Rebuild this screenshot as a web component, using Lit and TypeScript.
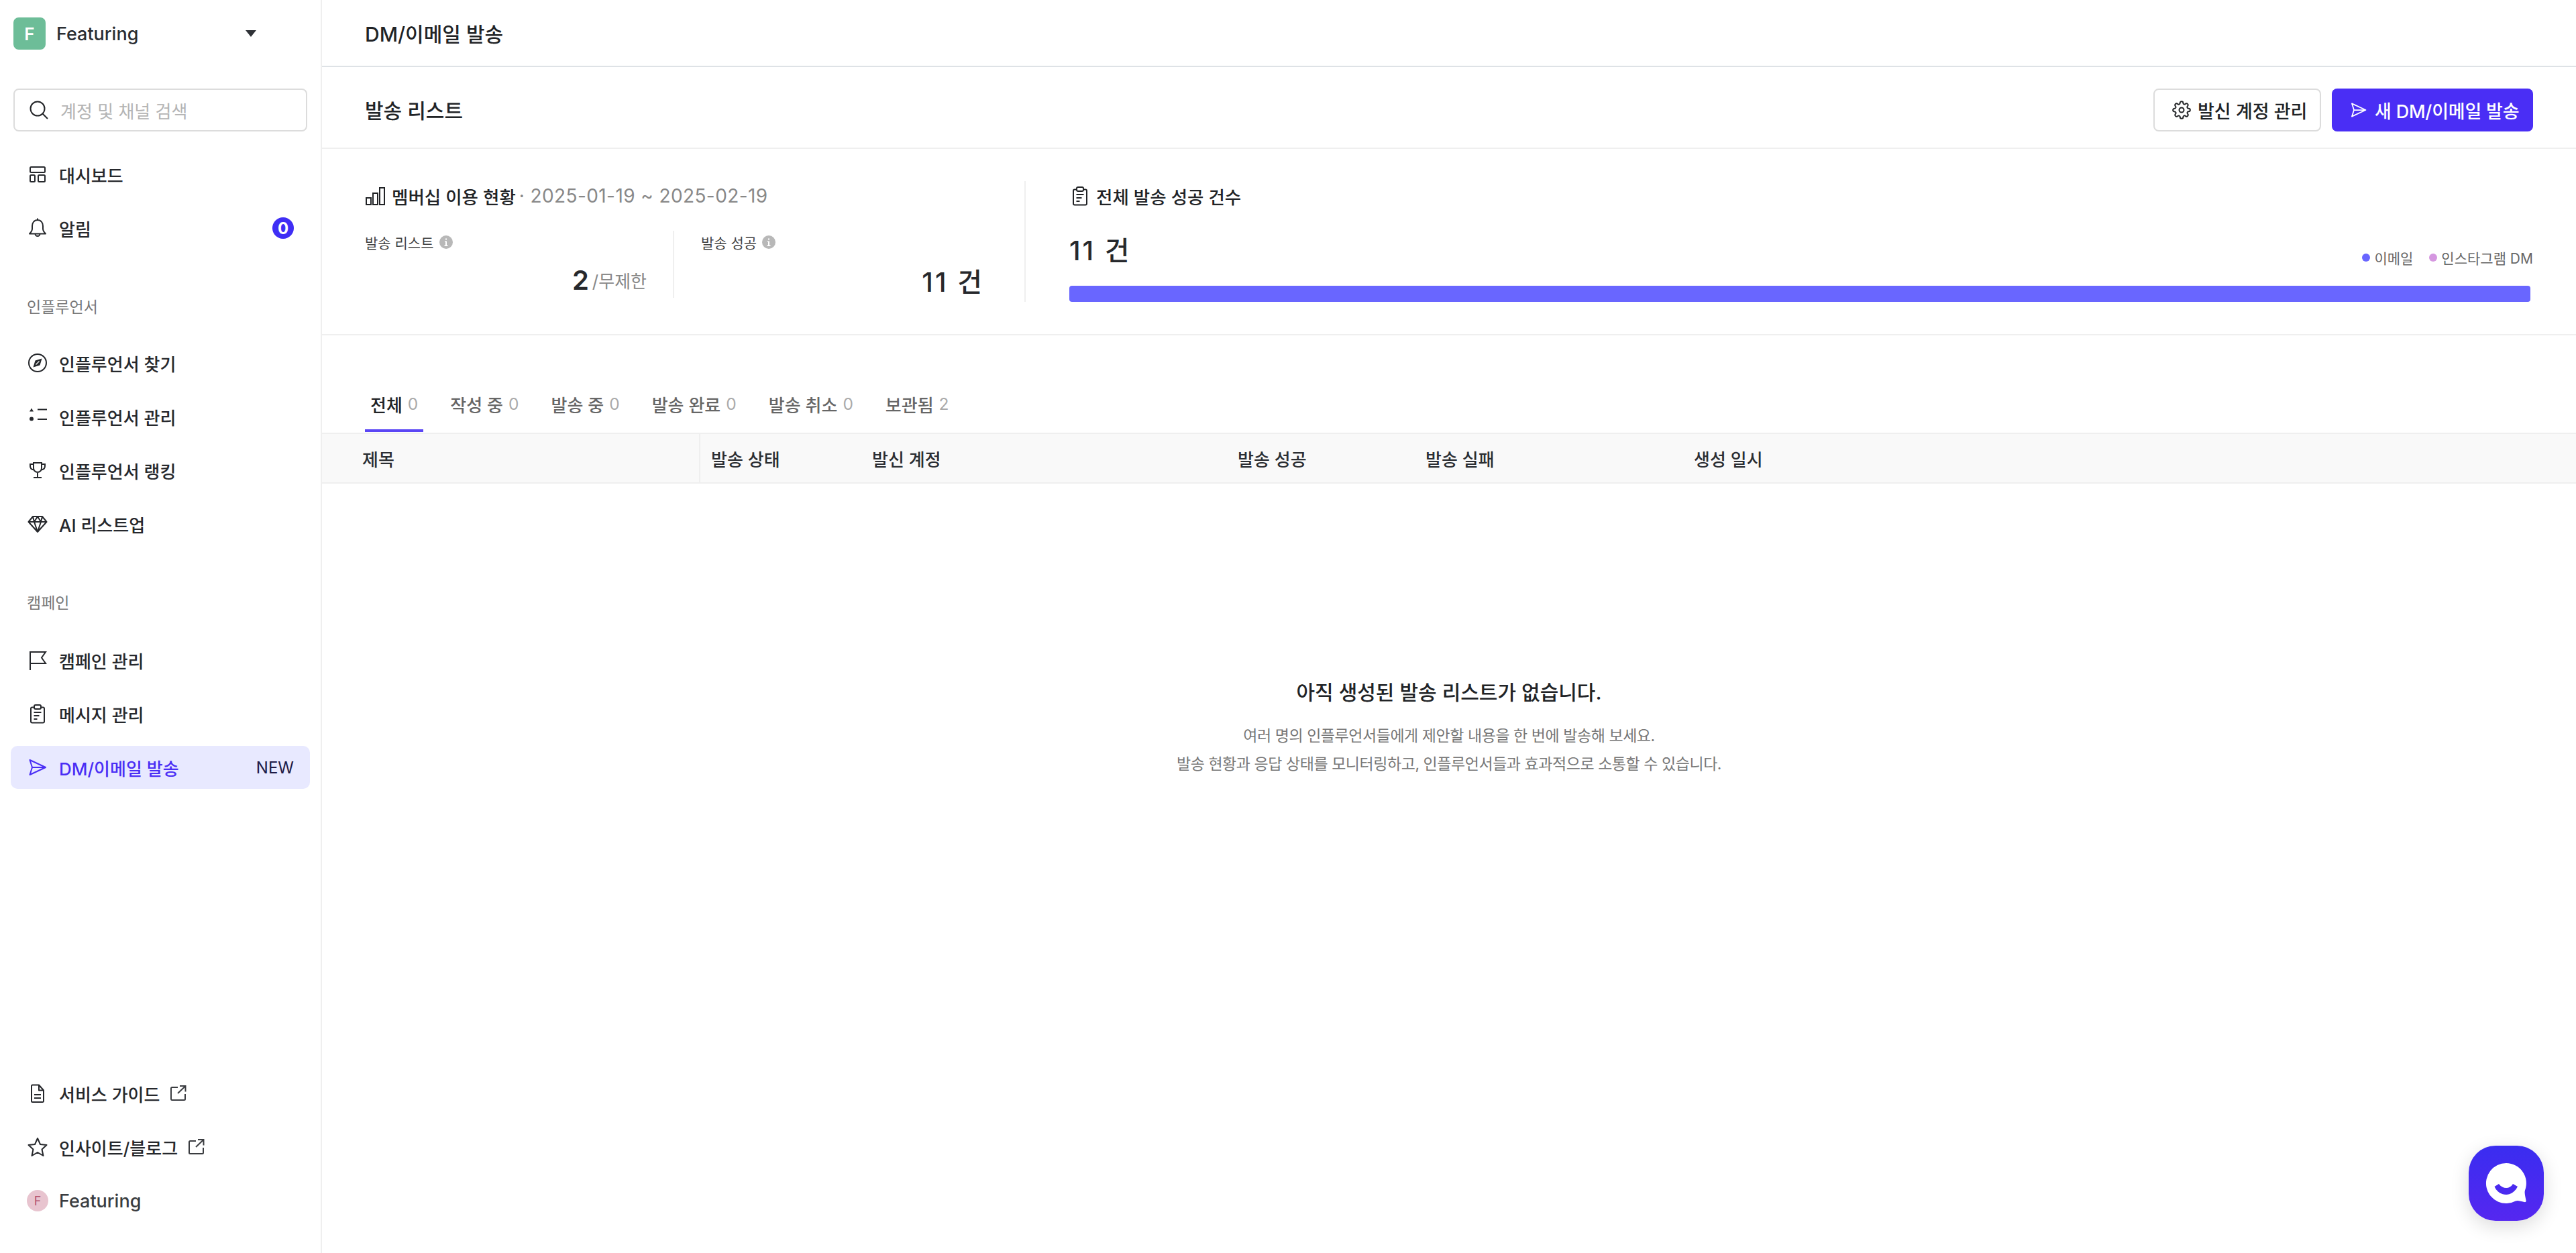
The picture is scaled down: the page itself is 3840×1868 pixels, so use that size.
import { LitElement, html, css, svg } from "lit";
import { customElement } from "lit/decorators.js";

const I = (s: unknown, cls = "ic") => html`<svg class=${cls} viewBox="0 0 32 32" fill="none" stroke="currentColor" stroke-width="2">${s}</svg>`;
const send = svg`<path stroke-linejoin="round" d="M4.5 5 28 16 4.5 27 8 16ZM8 16h20"/>`;
const icons: Record<string, unknown> = {
  dash: svg`<rect x="5" y="5" width="22" height="8" rx="1.5"/><rect x="5" y="17" width="7" height="10" rx="1.5"/><rect x="17" y="17" width="10" height="10" rx="1.5"/>`,
  bell: svg`<path stroke-linejoin="round" d="M16 4c-5 0-8 4-8 9v4c0 3-1.5 5-4 7.500h24c-2.500-2.500-4-4.500-4-7.500v-4c0-5-3-9-8-9ZM16 1.500V4M12.500 24.500a3.500 3.500 0 0 0 7 0"/>`,
  compass: svg`<circle cx="16" cy="16" r="13"/><path fill="currentColor" stroke="none" d="M9.500 22.500 12.500 12.500 22.500 9.500 19.500 19.500Z"/><path stroke="#fff" stroke-width="1.200" d="M13.500 18.500 18.500 13.500"/>`,
  list: svg`<path fill="currentColor" stroke="none" d="M7 3.500l3 5H4Z"/><circle cx="7" cy="19.500" r="3" fill="currentColor" stroke="none"/><path d="M16 5.500h14M16 20h14"/>`,
  trophy: svg`<path d="M10 5h12v8a6 6 0 0 1-12 0ZM10 7H5v3c0 3 2 5 5.500 5.500M22 7h5v3c0 3-2 5-5.500 5.500M16 19v8M10 27h12"/>`,
  gem: svg`<path stroke-linejoin="round" d="M9 5h14l6.500 8L16 28 2.500 13ZM2.500 13h27M11 13l5 15 5-15M9 5l2 8 5-8 5 8 2-8"/>`,
  flag: svg`<path d="M5 31V4h23l-6 8.500 6 8.500H5"/>`,
  clip: svg`<rect x="6" y="6.500" width="20" height="23" rx="2"/><rect x="11" y="3" width="10" height="6" rx="2" fill="#fff"/><path d="M10.500 14h11M10.500 19h8M10.500 24h5"/>`,
  send,
  doc: svg`<path stroke-linejoin="round" d="M7 5a1.500 1.500 0 0 1 1.500-1.500H18l7 8v16a1.500 1.500 0 0 1-1.500 1.500h-15A1.500 1.500 0 0 1 7 27.500ZM18 3.500v8h7M11 18h10M11 23h10"/>`,
  star: svg`<path stroke-linejoin="round" d="M16 3l4 9 9.500 1-7 6.500 2 9.500-8.500-5-8.500 5 2-9.500-7-6.500 9.500-1Z"/>`,
};
const ext = html`<svg class="ext" viewBox="0 0 24 24" fill="none" stroke="currentColor" stroke-width="2"><path d="M11 3H2.500A1.500 1.500 0 0 0 1 4.500v16A1.500 1.500 0 0 0 2.500 22h18a1.500 1.500 0 0 0 1.500-1.500V13M14 1h8.500v8.500M22 1.500 11 12"/></svg>`;
const gear = html`<svg class="gear" viewBox="0 0 24 24" fill="none" stroke="currentColor" stroke-width="1.700"><circle cx="12" cy="12" r="3"/><path d="M19.400 15a1.650 1.650 0 0 0 .33 1.820l.06.06a2 2 0 0 1 0 2.830 2 2 0 0 1-2.830 0l-.06-.06a1.650 1.650 0 0 0-1.820-.33 1.650 1.650 0 0 0-1 1.510V21a2 2 0 0 1-2 2 2 2 0 0 1-2-2v-.09A1.650 1.650 0 0 0 9 19.400a1.650 1.650 0 0 0-1.820.33l-.06.06a2 2 0 0 1-2.830 0 2 2 0 0 1 0-2.830l.06-.06a1.650 1.650 0 0 0 .33-1.820 1.650 1.650 0 0 0-1.510-1H3a2 2 0 0 1-2-2 2 2 0 0 1 2-2h.09A1.650 1.650 0 0 0 4.600 9a1.650 1.650 0 0 0-.33-1.820l-.06-.06a2 2 0 0 1 0-2.830 2 2 0 0 1 2.830 0l.06.06a1.650 1.650 0 0 0 1.820.33H9a1.650 1.650 0 0 0 1-1.510V3a2 2 0 0 1 2-2 2 2 0 0 1 2 2v.09a1.650 1.650 0 0 0 1 1.510 1.650 1.650 0 0 0 1.820-.33l.06-.06a2 2 0 0 1 2.830 0 2 2 0 0 1 0 2.830l-.06.06a1.650 1.650 0 0 0-.33 1.820V9a1.650 1.650 0 0 0 1.510 1H21a2 2 0 0 1 2 2 2 2 0 0 1-2 2h-.09a1.650 1.650 0 0 0-1.510 1z"/></svg>`;
const info = html`<svg class="info" viewBox="0 0 20 20"><circle cx="10" cy="10" r="10" fill="#b8b8b8"/><path fill="#fff" d="M9 4.500h2v2H9ZM8 8.500h3v6h1.500V16h-5v-1.500H9v-4.500H8Z"/></svg>`;

const tabs = [["전체", "0"], ["작성 중", "0"], ["발송 중", "0"], ["발송 완료", "0"], ["발송 취소", "0"], ["보관됨", "2"]];
const cols = ["제목", "발송 상태", "발신 계정", "발송 성공", "발송 실패", "생성 일시"];

@customElement("app-root")
export class AppRoot extends LitElement {
  static styles = css`
    :host { display: block; position: relative; height: 1868px; overflow: hidden; background: #fff; color: #212326;
      font-family: Inter, "Noto Sans CJK KR", sans-serif; font-size: 26px; }
    * { box-sizing: border-box; }
    .app { display: grid; grid-template-columns: 480px 1fr; height: 100%; }
    .side { display: flex; flex-direction: column; border-right: 2px solid #efefef; padding: 26px 16px 0; }
    .brand { display: flex; align-items: center; height: 48px; padding-left: 4px; }
    .logo { width: 48px; height: 48px; border-radius: 8px; background: #6dbd98; color: #fff; font-weight: 600; font-size: 26px;
      display: flex; align-items: center; justify-content: center; margin-right: 16px; }
    .brand-name { font-size: 27px; font-weight: 500; flex: 1; color: #2b2e33; }
    .caret { width: 16px; height: 10px; margin-right: 80px; fill: #2f3237; }
    .search { display: flex; align-items: center; height: 64px; margin: 58px 4px 32px; width: 438px; border: 2px solid #dcdcdc; border-radius: 8px; padding-left: 22px; color: #b4b4b4; }
    .search svg { width: 28px; height: 28px; color: #212326; margin-right: 18px; }
    .nav { display: flex; flex-direction: column; gap: 16px; }
    .item { display: flex; align-items: center; height: 64px; padding: 0 24px; border-radius: 10px; font-weight: 500; color: #26282c; gap: 16px; }
    .item.active { background: #e8e9ff; color: #4a2ef5; }
    .ic { width: 32px; height: 32px; flex: none; }
    .ext { width: 24px; height: 24px; color: #3a3c40; margin-left: 0; }
    .grow { flex: 1; }
    .label { font-size: 23px; color: #777; padding-left: 24px; height: 32px; line-height: 32px; margin: 70px 0 35px; }
    .label.second { margin-bottom: 37px; }
    .badge { width: 32px; height: 32px; border-radius: 50%; background: #3f2ef5; color: #fff; font-size: 24px; font-weight: 700;
      display: flex; align-items: center; justify-content: center; }
    .new { font-size: 24px; color: #1d1a45; font-weight: 400; }
    .foot { margin-top: auto; margin-bottom: 46px; }
    .avatar { width: 32px; height: 32px; border-radius: 50%; background: #e8c4cf; color: #b5536e; font-size: 18px; display: flex; align-items: center; justify-content: center; flex: none; font-weight: 400; }
    .foot .plain { color: #3a3c40; font-size: 27px; }

    .main { display: flex; flex-direction: column; min-width: 0; }
    .head { height: 100px; border-bottom: 2px solid #dee2e6; padding: 0 64px; display: flex; align-items: center; font-size: 30px; font-weight: 500; }
    .bar { height: 122px; border-bottom: 2px solid #efefef; padding: 32px 64px 24px; display: flex; align-items: center; justify-content: space-between; }
    .bar h1 { margin: -3px 0 0; font-size: 30px; font-weight: 500; color: #212326; }
    .btns { display: flex; gap: 16px; }
    .btn { height: 64px; border-radius: 8px; display: flex; align-items: center; font-size: 27px; font-weight: 500; }
    .btn.out { width: 250px; border: 2px solid #dcdcdc; color: #212326; padding-left: 26px; gap: 10px; }
    .btn.fill { width: 300px; background: #4a2ef5; color: #fff; font-weight: 500; padding-left: 26px; gap: 10px; letter-spacing: -.2px; }
    .gear { width: 28px; height: 28px; }
    .btn .ic { width: 28px; height: 28px; }

    .stats { display: flex; padding: 48px 64px; border-bottom: 2px solid #efefef; height: 278px; }
    .left { width: 985px; border-right: 2px solid #efefef; padding-right: 64px; }
    .right { flex: 1; margin-left: 65px; min-width: 0; }
    .st { display: flex; align-items: center; height: 44px; font-size: 26.5px; font-weight: 500; gap: 8px; color: #212326; }
    .st svg { width: 32px; height: 32px; flex: none; }
    .range { color: #888; font-weight: 400; letter-spacing: .4px; margin-left: -3px; font-size: 28px; }
    .cells { display: grid; grid-template-columns: 461px 1fr; margin-top: 30px; }
    .cell { height: 100px; display: flex; flex-direction: column; }
    .cell:first-child { border-right: 2px solid #efefef; padding-right: 40px; }
    .cell:last-child { padding-left: 40px; }
    .cl { display: flex; align-items: center; gap: 8px; height: 32px; margin-top: 2px; font-size: 21px; color: #444; }
    .info { width: 20px; height: 20px; }
    .cv { margin-top: 14px; height: 56px; display: flex; align-items: center; justify-content: flex-end; font-size: 40px; font-weight: 500; color: #26282c; letter-spacing: 3px; margin-right: -4px; }
    .cv small { font-size: 26px; font-weight: 400; color: #888; margin: 0 3px 0 2px; letter-spacing: 0; }
    .cv b { font-weight: 600; }
    .total { display: flex; justify-content: space-between; align-items: flex-end; margin-top: 32px; height: 56px; }
    .total span.n { font-size: 40px; font-weight: 500; line-height: 56px; color: #26282c; letter-spacing: 3px; }
    .legend { display: flex; gap: 24px; height: 28px; align-items: center; font-size: 21px; color: #666; margin-bottom: 4px; }
    .legend span { display: flex; align-items: center; gap: 6px; }
    .legend i { width: 12px; height: 12px; border-radius: 50%; background: #6966ff; }
    .legend i.p { background: #d597e0; }
    .track { height: 24px; margin: 24px 4px 0 0; border-radius: 4px; background: #6966ff; }

    .tabs { display: flex; gap: 32px; padding: 60px 64px 0; }
    .tab { height: 84px; padding: 0 8px; border-top: 4px solid transparent; border-bottom: 4px solid transparent; display: flex; align-items: center; gap: 8px; font-size: 26px; font-weight: 500; color: #666; }
    .tab.on { color: #212326; border-bottom-color: #5b46f5; }
    .tab em { font-style: normal; font-weight: 400; color: #aaa; font-size: 24.5px; }
    .thead { display: grid; grid-template-columns: 564px 240px 545px 280px 400px 1fr; height: 76px; margin-top: 1px; background: #f9f9f9;
      border-top: 2px solid #efefef; border-bottom: 2px solid #efefef; font-weight: 500; color: #2b2e33; }
    .thead div { display: flex; align-items: center; padding-left: 16px; }
    .thead div:first-child { padding-left: 60px; border-right: 2px solid #efefef; }
    .empty { display: flex; flex-direction: column; align-items: center; padding-top: 287px; }
    .empty h2 { margin: 0; font-size: 30px; line-height: 48px; font-weight: 500; color: #212326; }
    .empty p { margin: 20px 0 0; font-size: 23px; line-height: 42px; color: #777; text-align: center; letter-spacing: -.45px; }
    .chat { position: absolute; left: 3680px; top: 1708px; width: 112px; height: 112px; border-radius: 40px;
      background: linear-gradient(180deg, #3a2df0, #5527f0); box-shadow: 0 8px 28px rgba(0,0,0,.14); }
    .chat svg { width: 112px; height: 112px; display: block; }
  `;

  item(icon: string, text: string, extra: unknown = "", cls = "") {
    return html`<div class="item ${cls}">${I(icons[icon])}<span>${text}</span>${extra}</div>`;
  }

  render() {
    return html`<div class="app">
      <aside class="side">
        <div class="brand"><div class="logo">F</div><span class="brand-name">Featuring</span>
          <svg class="caret" viewBox="0 0 16 10"><path d="M0 0h16L8 10Z"/></svg></div>
        <div class="search"><svg viewBox="0 0 28 28" fill="none" stroke="currentColor" stroke-width="2"><circle cx="12" cy="12" r="10.500"/><path d="M19.500 19.500 27 27"/></svg><span>계정 및 채널 검색</span></div>
        <div class="nav">
          ${this.item("dash", "대시보드")}
          ${this.item("bell", "알림", html`<span class="grow"></span><span class="badge">0</span>`)}
        </div>
        <div class="label">인플루언서</div>
        <div class="nav">
          ${this.item("compass", "인플루언서 찾기")}
          ${this.item("list", "인플루언서 관리")}
          ${this.item("trophy", "인플루언서 랭킹")}
          ${this.item("gem", "AI 리스트업")}
        </div>
        <div class="label second">캠페인</div>
        <div class="nav">
          ${this.item("flag", "캠페인 관리")}
          ${this.item("clip", "메시지 관리")}
          ${this.item("send", "DM/이메일 발송", html`<span class="grow"></span><span class="new">NEW</span>`, "active")}
        </div>
        <div class="nav foot">
          ${this.item("doc", "서비스 가이드", ext)}
          ${this.item("star", "인사이트/블로그", ext)}
          <div class="item"><span class="avatar">F</span><span class="plain">Featuring</span></div>
        </div>
      </aside>
      <main class="main">
        <div class="head">DM/이메일 발송</div>
        <div class="bar"><h1>발송 리스트</h1>
          <div class="btns">
            <div class="btn out">${gear}<span>발신 계정 관리</span></div>
            <div class="btn fill">${I(send)}<span>새 DM/이메일 발송</span></div>
          </div>
        </div>
        <section class="stats">
          <div class="left">
            <div class="st"><svg viewBox="0 0 32 32" fill="none" stroke="currentColor" stroke-width="2"><rect x="2" y="19" width="7" height="10"/><rect x="12" y="12" width="7" height="17"/><rect x="22" y="4" width="7" height="25"/></svg><span>멤버십 이용 현황</span><span class="range">· 2025-01-19 ~ 2025-02-19</span></div>
            <div class="cells">
              <div class="cell"><div class="cl">발송 리스트 ${info}</div><div class="cv"><b>2</b><small>/무제한</small></div></div>
              <div class="cell"><div class="cl">발송 성공 ${info}</div><div class="cv">11 건</div></div>
            </div>
          </div>
          <div class="right">
            <div class="st">${I(icons.clip)}<span>전체 발송 성공 건수</span></div>
            <div class="total"><span class="n">11 건</span>
              <div class="legend"><span><i></i>이메일</span><span><i class="p"></i>인스타그램 DM</span></div></div>
            <div class="track"></div>
          </div>
        </section>
        <div class="tabs">${tabs.map((t, i) => html`<div class="tab ${i === 0 ? "on" : ""}">${t[0]}<em>${t[1]}</em></div>`)}</div>
        <div class="thead">${cols.map((c) => html`<div>${c}</div>`)}</div>
        <div class="empty">
          <h2>아직 생성된 발송 리스트가 없습니다.</h2>
          <p>여러 명의 인플루언서들에게 제안할 내용을 한 번에 발송해 보세요.<br>발송 현황과 응답 상태를 모니터링하고, 인플루언서들과 효과적으로 소통할 수 있습니다.</p>
        </div>
      </main>
      <div class="chat"><svg viewBox="0 0 112 112"><path fill="#fff" d="M56 26a30 30 0 0 1 28 40.500c-1 3 0 8 1.500 15 .4 2-.8 3-2.500 2.500-6-1.500-10-3-13-1.500A30 30 0 1 1 56 26Z"/><path fill="#4a2af0" d="M38.500 61 45 57c3 4 7 6 11 6s7.500-2 10-6l7 4c-4 8-11 12-17 12-7 0-14-4-17.500-12Z"/></svg></div>
    </div>`;
  }
}
